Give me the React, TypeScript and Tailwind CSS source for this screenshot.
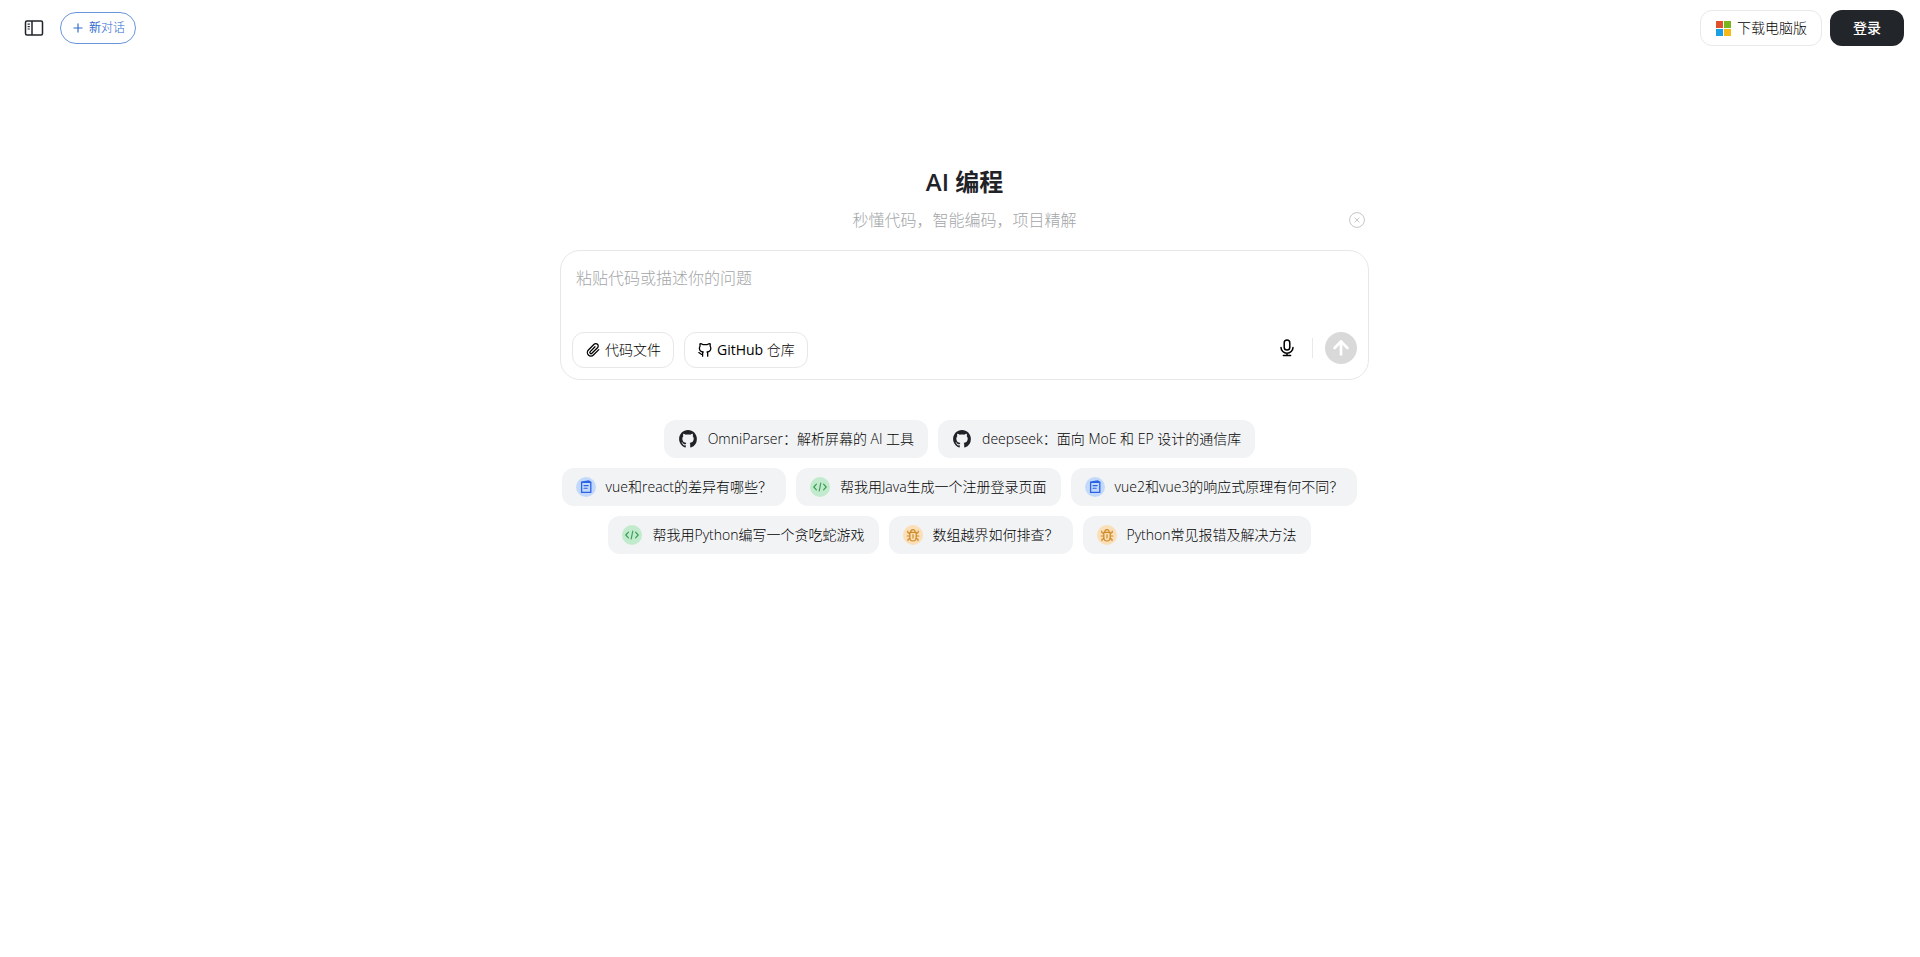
import React, { useState } from 'react';
import { ArrowUp, Plus } from 'lucide-react';

type ChipKind = 'github' | 'doc' | 'code' | 'bug';

interface Chip {
  kind: ChipKind;
  text: string;
}

const chipRows: Chip[][] = [
  [
    { kind: 'github', text: 'OmniParser：解析屏幕的 AI 工具' },
    { kind: 'github', text: 'deepseek：面向 MoE 和 EP 设计的通信库' },
  ],
  [
    { kind: 'doc', text: 'vue和react的差异有哪些？' },
    { kind: 'code', text: '帮我用Java生成一个注册登录页面' },
    { kind: 'doc', text: 'vue2和vue3的响应式原理有何不同？' },
  ],
  [
    { kind: 'code', text: '帮我用Python编写一个贪吃蛇游戏' },
    { kind: 'bug', text: '数组越界如何排查？' },
    { kind: 'bug', text: 'Python常见报错及解决方法' },
  ],
];

const ChipIcon: React.FC<{ kind: ChipKind }> = ({ kind }) => {
  if (kind === 'github') {
    return (
      <svg className="size-5 shrink-0 text-[#1f2328]" viewBox="-1 -1 18 18" fill="currentColor" aria-hidden="true">
        <path d="M8 0C3.58 0 0 3.58 0 8c0 3.54 2.29 6.53 5.47 7.59.4.07.55-.17.55-.38 0-.19-.01-.82-.01-1.49-2.01.37-2.53-.49-2.69-.94-.09-.23-.48-.94-.82-1.13-.28-.15-.68-.52-.01-.53.63-.01 1.08.58 1.23.82.72 1.21 1.87.87 2.33.66.07-.52.28-.87.51-1.07-1.78-.2-3.64-.89-3.64-3.95 0-.87.31-1.59.82-2.15-.08-.2-.36-1.02.08-2.12 0 0 .67-.21 2.2.82.64-.18 1.32-.27 2-.27s1.36.09 2 .27c1.53-1.04 2.2-.82 2.2-.82.44 1.1.16 1.92.08 2.12.51.56.82 1.27.82 2.15 0 3.07-1.87 3.75-3.65 3.95.29.25.54.73.54 1.48 0 1.07-.01 1.93-.01 2.2 0 .21.15.46.55.38A8.01 8.01 0 0 0 16 8c0-4.42-3.58-8-8-8z" />
      </svg>
    );
  }
  if (kind === 'doc') {
    return (
      <svg className="size-5 shrink-0" viewBox="0 0 20 20" fill="none" stroke="#2b63e3" strokeWidth="1.3" strokeLinejoin="round" strokeLinecap="round" aria-hidden="true">
        <circle cx="10" cy="10" r="10" fill="#c3d9fb" stroke="none" />
        <path d="M5.600 5.200 12.800 4l2 1.200v10.200H5.600z" />
        <path d="M5.600 5.400h9" />
        <path d="M8 8.600h4.200M8 11.200h3.200" strokeWidth="1.1" />
      </svg>
    );
  }
  if (kind === 'code') {
    return (
      <svg className="size-5 shrink-0" viewBox="0 0 20 20" fill="none" stroke="#3c9e57" strokeWidth="1.2" strokeLinejoin="round" strokeLinecap="round" aria-hidden="true">
        <circle cx="10" cy="10" r="10" fill="#c2ebcd" stroke="none" />
        <path d="M6.4 7.2 3.8 10l2.6 2.8M13.6 7.2l2.6 2.8-2.6 2.8M10.8 6 9.2 14" />
      </svg>
    );
  }
  return (
    <svg className="size-5 shrink-0" viewBox="0 0 20 20" fill="none" stroke="#cf8a26" strokeWidth="1.2" strokeLinejoin="round" strokeLinecap="round" aria-hidden="true">
      <circle cx="10" cy="10" r="10" fill="#fadfb9" stroke="none" />
      <path d="M6.8 7.4h6.4v5.4a3.2 3.2 0 0 1-6.4 0z" />
      <path d="M7.8 7.2a2.2 2.6 0 0 1 4.4 0M10 9.6v3.4M6.8 8.8 4.8 7.6V6M13.2 8.8l2-1.2V6M6.8 11H4.2M13.2 11h2.6M7 13.400l-2 .8v1.4M13 13.400l2 .8v1.4" />
    </svg>
  );
};

const App: React.FC = () => {
  const [prompt, setPrompt] = useState('');

  return (
    <div className="min-h-screen bg-white font-['Open_Sans','Noto_Sans_CJK_SC',sans-serif] font-light text-black">
      {/* Top bar */}
      <header className="flex items-center justify-between pl-6 pr-4 pt-2.5">
        <div className="flex items-center gap-4">
          <button type="button" aria-label="展开侧边栏" className="flex size-5 items-center justify-center">
            <svg className="size-5" viewBox="0 0 20 20" fill="none" stroke="#1f2328" strokeWidth="1.5" aria-hidden="true">
              <rect x="1.5" y="3" width="17" height="14" rx="1.5" />
              <path d="M8 3v14" />
              <path d="M3.6 6.2h2.2M3.6 8.6h2.2M3.6 11h2.2" strokeWidth="1.2" />
            </svg>
          </button>
          <button type="button" className="flex h-8 items-center gap-1 rounded-full border border-[#6a96dc] px-2.5 text-xs text-[#2f6bd0]">
            <Plus className="size-3.5" strokeWidth={2} />
            <span><span className="font-normal">新</span>对话</span>
          </button>
        </div>
        <div className="flex items-center gap-2">
          <button type="button" className="flex h-9 items-center gap-1.5 rounded-xl border border-[#e8e9eb] px-3.5 text-sm">
            <svg className="size-4" viewBox="0 0 16 16" aria-hidden="true">
              <path fill="#e2502b" d="M1 1h7v7H1z" />
              <path fill="#79b51c" d="M9 1h7v7H9z" />
              <path fill="#1b9fe3" d="M1 9h7v7H1z" />
              <path fill="#f7b916" d="M9 9h7v7H9z" />
            </svg>
            下载电脑版
          </button>
          <button type="button" className="h-9 rounded-xl bg-[#222529] px-[23px] text-sm font-medium text-white">登录</button>
        </div>
      </header>

      <main className="pl-[9px] pt-[118px]">
        <div className="mx-auto max-w-[809px]">
          <h1 className="text-center text-2xl leading-9 font-semibold text-[#1f2328]">AI 编程</h1>
          <div className="grid h-10 grid-cols-[1fr_auto_1fr] items-center">
            <p className="col-start-2 text-base text-[#a3a6a9]">秒懂代码，智能编码，项目精解</p>
            <button type="button" aria-label="关闭" className="mr-1 size-4 justify-self-end">
              <svg className="size-4" viewBox="0 0 16 16" fill="none" stroke="#c6c6c6" aria-hidden="true">
                <circle cx="8" cy="8" r="7.4" />
                <path d="m5.6 5.6 4.8 4.8M10.4 5.6l-4.8 4.8" />
              </svg>
            </button>
          </div>

          {/* Prompt box */}
          <div className="mt-2.5 rounded-[20px] border border-[#e6e7e9] px-[11px] pb-[11px] pt-[13px]">
            <textarea
              aria-label="问题"
              value={prompt}
              onChange={(e) => setPrompt(e.target.value)}
              placeholder="粘贴代码或描述你的问题"
              className="block h-[68px] w-full resize-none px-1 text-base leading-7 outline-none placeholder:text-[#a3a6a9]"
            />
            <div className="flex items-start justify-between">
              <div className="flex gap-2.5">
                <button type="button" className="flex h-9 items-center gap-1 rounded-xl border border-[#e6e7e9] px-3 text-sm">
                  <svg className="size-4" viewBox="0 0 16 16" fill="none" stroke="currentColor" strokeWidth="1.3" strokeLinejoin="round" strokeLinecap="round" aria-hidden="true">
                    <path d="m13.800 7.600-5.400 5.400a3.500 3.500 0 0 1-5-5l5.700-5.700a2.400 2.400 0 0 1 3.400 3.400l-5.600 5.600a1.200 1.200 0 0 1-1.700-1.700l4.800-4.800" />
                  </svg>
                  代码文件
                </button>
                <button type="button" className="flex h-9 items-center gap-1 rounded-xl border border-[#e6e7e9] px-3 text-sm">
                  <svg className="size-4" viewBox="0 0 16 16" fill="none" stroke="currentColor" strokeWidth="1.3" strokeLinejoin="round" strokeLinecap="round" aria-hidden="true">
                    <path d="M5.600 14.200v-2.600c0-.7.2-1.200.6-1.600C3.700 9.700 2.400 8.500 2.400 6.200c0-.9.2-1.500.7-2.100-.3-.8-.2-1.700.1-2.500.9 0 1.800.4 2.600 1h4.600c.8-.6 1.700-1 2.600-1 .3.800.4 1.700.1 2.500.5.600.7 1.200.7 2.100 0 2.300-1.400 3.500-3.700 3.800.4.400.6.900.6 1.600v2.600" />
                    <path d="M1.800 10.600c1.400 0 1.300 2 3.600 2" />
                  </svg>
                  <span><span className="font-medium">GitHub</span> 仓库</span>
                </button>
              </div>
              <div className="flex items-center">
                <button type="button" aria-label="语音输入" className="size-[18px] text-black">
                  <svg className="size-[18px]" viewBox="0 0 18 18" fill="none" stroke="currentColor" strokeWidth="1.5" strokeLinecap="round" aria-hidden="true">
                    <rect x="6.200" y="1" width="5.600" height="10" rx="2.800" />
                    <path d="M3 8.600a6 5.600 0 0 0 12 0M9 14.200v2.400M5.400 16.600h7.200" />
                  </svg>
                </button>
                <span className="ml-4 h-5 w-px bg-[#e8e9eb]" />
                <button type="button" aria-label="发送" className="ml-3 flex size-8 items-center justify-center rounded-full bg-[#d9d9d9] text-white">
                  <ArrowUp className="size-[22px]" strokeWidth={3} />
                </button>
              </div>
            </div>
          </div>

          {/* Suggested questions */}
          <div className="mt-10 flex flex-col gap-2.5">
            {chipRows.map((row, i) => (
              <div key={i} className="flex flex-wrap justify-center gap-y-2.5">
                {row.map((chip) => (
                  <button
                    key={chip.text}
                    type="button"
                    className="mr-2.5 flex h-[38px] items-center gap-2.5 rounded-xl bg-[#f2f3f5] px-3.5 text-sm whitespace-nowrap"
                  >
                    <ChipIcon kind={chip.kind} />
                    {chip.text}
                  </button>
                ))}
              </div>
            ))}
          </div>
        </div>
      </main>
    </div>
  );
};

export default App;
